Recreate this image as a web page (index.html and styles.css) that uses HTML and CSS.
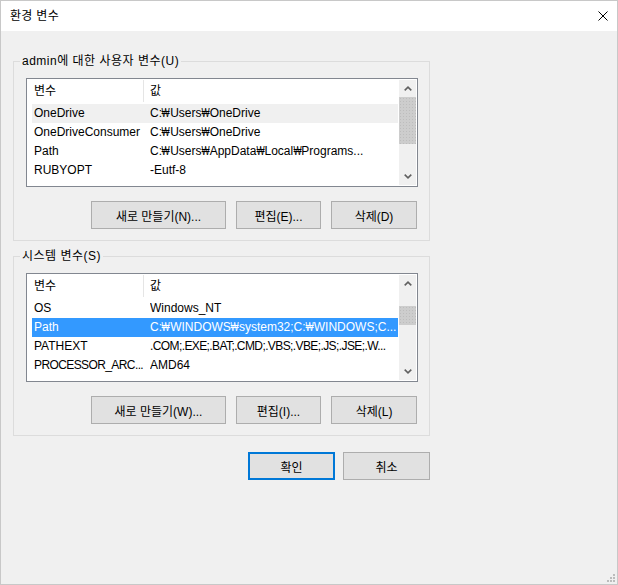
FILE: index.html
```html
<!DOCTYPE html>
<html lang="ko">
<head>
    <meta charset="UTF-8">
    <meta name="viewport" content="width=device-width, initial-scale=1.0">
    <title>환경 변수</title>
    <link rel="stylesheet" href="styles.css">
</head>
<body>
    <div class="window">
        <div class="titlebar">
            <span class="title">환경 변수</span>
            <svg class="close-icon" width="10" height="10" viewBox="0 0 10 10">
                <path d="M0.5 0.5 L9.5 9.5 M9.5 0.5 L0.5 9.5" stroke="#000" stroke-width="1" fill="none"/>
            </svg>
        </div>

        <div class="content">
            <!-- 사용자 변수 -->
            <div class="group">
                <div class="group-title">admin에 대한 사용자 변수(U)</div>
                <div class="listbox">
                    <div class="list-main">
                        <div class="list-head">
                            <div class="head-name">변수</div>
                            <div class="head-value">값</div>
                        </div>
                        <div class="list-rows">
                            <div class="row dim"><span class="cell-name">OneDrive</span><span class="cell-value">C:<span class="won">₩</span>Users<span class="won">₩</span>OneDrive</span></div>
                            <div class="row"><span class="cell-name">OneDriveConsumer</span><span class="cell-value">C:<span class="won">₩</span>Users<span class="won">₩</span>OneDrive</span></div>
                            <div class="row"><span class="cell-name">Path</span><span class="cell-value">C:<span class="won">₩</span>Users<span class="won">₩</span>AppData<span class="won">₩</span>Local<span class="won">₩</span>Programs...</span></div>
                            <div class="row"><span class="cell-name">RUBYOPT</span><span class="cell-value">-Eutf-8</span></div>
                        </div>
                    </div>
                    <div class="scrollbar">
                        <div class="sb-btn">
                            <svg width="8" height="5" viewBox="0 0 8 5"><polyline points="0.7,4.3 4,1.2 7.3,4.3" fill="none" stroke="#606060" stroke-width="1.6"/></svg>
                        </div>
                        <div class="sb-track"><div class="thumb thumb-user"></div></div>
                        <div class="sb-btn">
                            <svg width="8" height="5" viewBox="0 0 8 5"><polyline points="0.7,0.7 4,3.8 7.3,0.7" fill="none" stroke="#606060" stroke-width="1.6"/></svg>
                        </div>
                    </div>
                </div>
                <div class="btn-row">
                    <button class="btn btn-new">새로 만들기(N)...</button>
                    <button class="btn btn-edit">편집(E)...</button>
                    <button class="btn btn-delete">삭제(D)</button>
                </div>
            </div>

            <!-- 시스템 변수 -->
            <div class="group group-system">
                <div class="group-title">시스템 변수(S)</div>
                <div class="listbox">
                    <div class="list-main">
                        <div class="list-head">
                            <div class="head-name">변수</div>
                            <div class="head-value">값</div>
                        </div>
                        <div class="list-rows">
                            <div class="row"><span class="cell-name">OS</span><span class="cell-value">Windows_NT</span></div>
                            <div class="row active"><span class="cell-name">Path</span><span class="cell-value">C:<span class="won">₩</span>WINDOWS<span class="won">₩</span>system32;C:<span class="won">₩</span>WINDOWS;C...</span></div>
                            <div class="row"><span class="cell-name">PATHEXT</span><span class="cell-value tight">.COM;.EXE;.BAT;.CMD;.VBS;.VBE;.JS;.JSE;.W...</span></div>
                            <div class="row"><span class="cell-name tight">PROCESSOR_ARC...</span><span class="cell-value">AMD64</span></div>
                        </div>
                    </div>
                    <div class="scrollbar">
                        <div class="sb-btn">
                            <svg width="8" height="5" viewBox="0 0 8 5"><polyline points="0.7,4.3 4,1.2 7.3,4.3" fill="none" stroke="#606060" stroke-width="1.6"/></svg>
                        </div>
                        <div class="sb-track"><div class="thumb thumb-system"></div></div>
                        <div class="sb-btn">
                            <svg width="8" height="5" viewBox="0 0 8 5"><polyline points="0.7,0.7 4,3.8 7.3,0.7" fill="none" stroke="#606060" stroke-width="1.6"/></svg>
                        </div>
                    </div>
                </div>
                <div class="btn-row">
                    <button class="btn btn-new">새로 만들기(W)...</button>
                    <button class="btn btn-edit">편집(I)...</button>
                    <button class="btn btn-delete">삭제(L)</button>
                </div>
            </div>

            <div class="dialog-buttons">
                <button class="btn btn-dialog btn-default">확인</button>
                <button class="btn btn-dialog">취소</button>
            </div>
        </div>

        <svg class="grip" width="8" height="8" viewBox="0 0 8 8">
            <rect x="6" y="0" width="2" height="2" fill="#bcbcbc"/>
            <rect x="3" y="3" width="2" height="2" fill="#bcbcbc"/>
            <rect x="6" y="3" width="2" height="2" fill="#bcbcbc"/>
            <rect x="0" y="6" width="2" height="2" fill="#bcbcbc"/>
            <rect x="3" y="6" width="2" height="2" fill="#bcbcbc"/>
            <rect x="6" y="6" width="2" height="2" fill="#bcbcbc"/>
        </svg>
    </div>
</body>
</html>
```

FILE: styles.css
```css
body {
    margin: 0;
    font-family: "Liberation Sans", "DejaVu Sans", "Noto Sans CJK KR", sans-serif;
    font-size: 12px;
    color: #000;
}

.window {
    position: relative;
    width: 618px;
    height: 585px;
    box-sizing: border-box;
    border: 1px solid #c8c8c8;
    background-color: #f0f0f0;
}

.titlebar {
    height: 30px;
    background-color: #ffffff;
    display: flex;
    align-items: center;
    justify-content: space-between;
    padding: 0 9px;
}

.title {
    line-height: 30px;
    letter-spacing: 0.3px;
}

.content {
    padding: 30px 0 0 12px;
}

.group {
    width: 417px;
    box-sizing: border-box;
    border: 1px solid #dcdcdc;
    padding: 0 11px 11px 12px;
}

.group-system {
    margin-top: 15px;
}

.group-title {
    width: max-content;
    height: 16px;
    line-height: 16px;
    margin: -9px 0 0 -6px;
    padding: 0 2px;
    letter-spacing: 0.5px;
    background-color: #f0f0f0;
}

.listbox {
    display: flex;
    height: 109px;
    box-sizing: border-box;
    margin-top: 9px;
    border: 1px solid #828790;
    background-color: #ffffff;
}

.list-main {
    flex: 1;
    min-width: 0;
    overflow: hidden;
}

.list-head {
    display: flex;
    height: 25px;
}

.head-name {
    width: 117px;
    height: 22px;
    line-height: 22px;
    margin-top: 1px;
    padding-left: 7px;
    box-sizing: border-box;
    border-right: 1px solid #e5e5e5;
}

.head-value {
    height: 22px;
    line-height: 22px;
    margin-top: 1px;
    padding-left: 6px;
}

.list-rows {
    padding: 0 1px 0 5px;
}

.row {
    display: flex;
    height: 19px;
    line-height: 19px;
    white-space: nowrap;
}

.row.dim {
    background-color: #f0f0f0;
}

.row.active {
    background-color: #3399ff;
    color: #ffffff;
}

.cell-name {
    width: 118px;
    flex-shrink: 0;
    padding-left: 2px;
    box-sizing: border-box;
    overflow: hidden;
}

.cell-value {
    flex: 1;
    min-width: 0;
    overflow: hidden;
}

/* 원화 기호가 Segoe UI보다 넓어서 가로로 줄임 */
.won {
    display: inline-block;
    transform: scaleX(0.72);
    margin: 0 -1.6px;
}

.tight {
    letter-spacing: -0.6px;
}

.scrollbar {
    width: 17px;
    margin: 1px 1px 1px 0;
    display: flex;
    flex-direction: column;
    background-color: #f0f0f0;
}

.sb-btn {
    height: 17px;
    display: flex;
    align-items: center;
    justify-content: center;
}

.sb-track {
    flex: 1;
}

.thumb {
    background-color: #cdcdcd;
    background-image: radial-gradient(#bdbdbd 0.6px, transparent 0.7px);
    background-size: 3px 3px;
}

.thumb-user {
    height: 47px;
}

.thumb-system {
    margin-top: 14px;
    height: 19px;
}

.btn-row {
    display: flex;
    justify-content: flex-end;
    gap: 10px;
    margin: 14px 1px 0 0;
}

.btn {
    height: 28px;
    box-sizing: border-box;
    padding: 0;
    border: 1px solid #adadad;
    background-color: #e1e1e1;
    font-family: inherit;
    font-size: 12px;
    color: #000;
}

.btn-new {
    width: 135px;
}

.btn-edit {
    width: 85px;
}

.btn-delete {
    width: 86px;
}

.dialog-buttons {
    width: 417px;
    display: flex;
    justify-content: flex-end;
    gap: 8px;
    margin-top: 16px;
}

.btn-dialog {
    width: 87px;
}

.btn-default {
    border: 2px solid #0078d7;
}

.grip {
    position: absolute;
    right: 2px;
    bottom: 2px;
}
```
